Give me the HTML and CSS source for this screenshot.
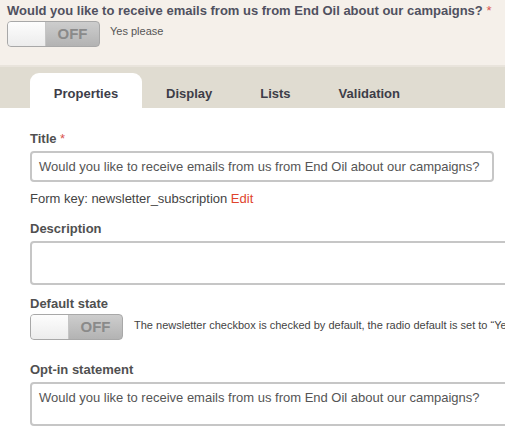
FILE: index.html
```html
<!DOCTYPE html>
<html>
<head>
<meta charset="utf-8">
<link rel="stylesheet" href="styles.css">
</head>
<body>
<div class="preview">
  <div class="preview-title">Would you like to receive emails from us from End Oil about our campaigns? <span class="req">*</span></div>
  <div class="toggle-row">
    <div class="toggle"><span class="knob"></span><span class="off">OFF</span></div>
    <span class="small">Yes please</span>
  </div>
</div>
<div class="tabbar">
  <div class="tab active">Properties</div>
  <div class="tab">Display</div>
  <div class="tab">Lists</div>
  <div class="tab">Validation</div>
</div>
<div class="content">
  <div class="field title-field">
    <div class="label">Title <span class="req">*</span></div>
    <div class="input">Would you like to receive emails from us from End Oil about our campaigns?</div>
    <div class="formkey">Form key: newsletter_subscription <span class="edit">Edit</span></div>
  </div>
  <div class="field">
    <div class="label">Description</div>
    <div class="textarea"></div>
  </div>
  <div class="field">
    <div class="label">Default state</div>
    <div class="toggle-row">
      <div class="toggle"><span class="knob"></span><span class="off">OFF</span></div>
      <span class="small">The newsletter checkbox is checked by default, the radio default is set to “Yes”</span>
    </div>
  </div>
  <div class="field optin">
    <div class="label">Opt-in statement</div>
    <div class="textarea">Would you like to receive emails from us from End Oil about our campaigns?</div>
  </div>
</div>
</body>
</html>
```

FILE: styles.css
```css
html, body {
  margin: 0;
  padding: 0;
  background: #fff;
  font-family: "Liberation Sans", Arial, sans-serif;
  color: #4e4e4e;
  overflow: hidden;
  width: 505px;
  height: 434px;
}
.req { color: #d9534f; font-weight: normal; }
.preview {
  background: #f5f0ea;
  height: 67px;
  padding: 0 0 0 7px;
  box-sizing: border-box;
  border-bottom: 2px solid #e9e4dc;
}
.preview-title {
  font-size: 13px;
  font-weight: bold;
  color: #505060;
  padding-top: 3px;
  line-height: 15px;
  white-space: nowrap;
}
.toggle-row {
  display: flex;
  align-items: flex-start;
  gap: 10px;
  white-space: nowrap;
}
.preview .toggle-row { margin-top: 3px; }
.toggle {
  width: 93px;
  height: 26px;
  box-sizing: border-box;
  border: 1px solid #a8a8a8;
  border-radius: 4px;
  background: linear-gradient(#cdcdcd, #b3b3b3);
  display: flex;
  overflow: hidden;
  flex: none;
}
.knob {
  width: 37px;
  height: 100%;
  background: linear-gradient(#fdfdfd, #ececec);
  border-right: 1px solid #c5c5c5;
}
.off {
  flex: 1;
  text-align: center;
  font-weight: bold;
  font-size: 15px;
  line-height: 24px;
  color: #8a8a8a;
}
.small {
  font-size: 11px;
  color: #555;
  line-height: 14px;
  padding-top: 3px;
}
.tabbar {
  background: #e0dcd1;
  height: 41px;
  box-sizing: border-box;
  padding: 6px 0 0 30px;
  display: flex;
  align-items: flex-end;
}
.tab {
  height: 35px;
  line-height: 42px;
  font-size: 13px;
  font-weight: bold;
  color: #3d3d48;
  padding: 0 24px;
}
.tab.active {
  background: #fff;
  border-radius: 9px 9px 0 0;
  width: 112px;
  box-sizing: border-box;
  text-align: center;
  padding: 0;
}
.content {
  padding: 23px 0 0 30px;
}
.field { margin-bottom: 11px; }
.title-field { margin-bottom: 15px; }
.label {
  font-size: 13px;
  font-weight: bold;
  color: #505050;
  line-height: 15px;
  margin-bottom: 5px;
}
.input {
  width: 464px;
  height: 31px;
  box-sizing: border-box;
  border: 2px solid #c6c6c6;
  border-radius: 4px;
  font-size: 13px;
  color: #555;
  line-height: 27px;
  padding-left: 7px;
  white-space: nowrap;
}
.formkey {
  font-size: 13px;
  color: #444;
  margin-top: 9px;
  line-height: 15px;
}
.edit { color: #e0442c; }
.textarea {
  width: 500px;
  height: 44px;
  box-sizing: border-box;
  border: 2px solid #c6c6c6;
  border-radius: 4px;
  font-size: 13px;
  color: #555;
  padding: 5px 7px;
  white-space: nowrap;
  line-height: 18px;
}
.content .toggle-row { gap: 11px; margin-top: -2px; }
.content .toggle-row .small { padding-top: 4px; color: #444; }
.optin { margin-top: 22px; }
```
